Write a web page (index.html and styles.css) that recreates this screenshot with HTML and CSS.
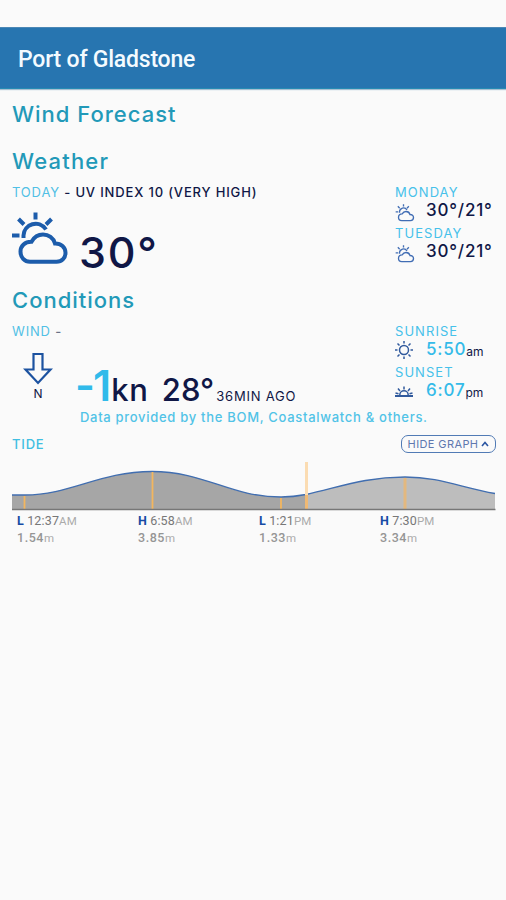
FILE: index.html
```html
<!DOCTYPE html>
<html lang="en">
<head>
<meta charset="utf-8">
<title>Port of Gladstone</title>
<link rel="stylesheet" href="styles.css">
</head>
<body>
<svg class="defs" aria-hidden="true">
  <symbol id="cloud" viewBox="0 0 56 54">
    <path d="M18 49.800H44.500c5.500 0 9-4 9-9 0-5.500-4.500-9.500-10.500-9.300C41.500 26 36.500 22.500 31 22.500c-5.500 0-9 2.800-11.500 7.200C13 29.500 8.500 34 8.500 39.500c0 6 4 10.300 9.500 10.300z"/>
    <path d="M11.500 26v-2.500C12 12 27 7 34 17.500"/>
    <path d="M23.500 .5v7M6.500 7l5.500 5.500M39.500 7l-5.500 5.500M0 23.500h7.500"/>
  </symbol>
</svg>
<div class="statusbar"></div>
<header class="appbar">Port of Gladstone</header>
<main>
  <h2 class="first">Wind Forecast</h2>
  <h2 class="second">Weather</h2>
  <section class="split weather">
    <div>
      <p class="label uv"><span>TODAY</span> - UV INDEX 10 (VERY HIGH)</p>
      <div class="current">
        <svg class="cloud-big"><use href="#cloud"/></svg>
        <span class="temp">30°</span>
      </div>
    </div>
    <aside>
      <p class="day">MONDAY</p>
      <div class="reading"><svg class="cloud-small"><use href="#cloud"/></svg><span class="range">30°/21°</span></div>
      <p class="day">TUESDAY</p>
      <div class="reading"><svg class="cloud-small"><use href="#cloud"/></svg><span class="range">30°/21°</span></div>
    </aside>
  </section>
  <h2 class="third">Conditions</h2>
  <section class="split conditions">
    <div>
      <p class="label wind"><span>WIND</span> <em>-</em></p>
      <div class="windrow">
        <div class="direction">
          <svg width="30" height="34" viewBox="0 0 30 34"><path d="M10.500 2h9v15.500h8L15 31 2.500 17.500h8z" fill="none" stroke="#1c52a0" stroke-width="2.200"/></svg>
          <span>N</span>
        </div>
        <span class="speed">-1</span><span class="unit">kn</span><span class="air">28°</span><span class="ago">36MIN AGO</span>
      </div>
    </div>
    <aside>
      <p class="day">SUNRISE</p>
      <div class="reading">
        <svg class="sun" viewBox="0 0 18 18"><circle cx="9" cy="9" r="4.500"/><path d="M9 0v2.500M9 15.500V18M0 9h2.500M15.500 9H18M2.500 2.500l2 2M13.500 13.500l2 2M2.500 15.500l2-2M13.500 4.500l2-2"/></svg>
        <span class="time">5:50</span><small>am</small>
      </div>
      <p class="day">SUNSET</p>
      <div class="reading">
        <svg class="sun" viewBox="0 0 18 18"><path d="M0 14h18" stroke-width="2"/><path d="M4.800 13a4.200 4.200 0 0 1 8.400 0M9 4.500v3M3 6.500l2 2.500M15 6.500l-2 2.500M.5 11l3 .7M17.500 11l-3 .7"/></svg>
        <span class="time">6:07</span><small>pm</small>
      </div>
    </aside>
  </section>
  <p class="credit">Data provided by the BOM, Coastalwatch &amp; others.</p>
  <div class="tidehead">
    <span class="tide">TIDE</span>
    <button type="button"><span>HIDE GRAPH</span><svg width="8" height="6" viewBox="0 0 8 6"><path d="M1 5l3-3.500L7 5" fill="none" stroke="#2b55a2" stroke-width="1.600"/></svg></button>
  </div>
  <svg class="graph" width="484" height="52" viewBox="12 460 484 52">
    <path fill="#a6a6a6" d="M12 495H25C70 495 100 471.500 152 471.500C205 471.500 230 497 281 497Q293 497 306 494.500V510H12z"/>
    <path fill="#bdbdbd" d="M306 494.500C340 487 365 477 405 477C438 477 460 487 495 493.500V510H306z"/>
    <path fill="none" stroke="#416eb0" stroke-width="1.300" d="M12 495H25C70 495 100 471.500 152 471.500C205 471.500 230 497 281 497Q293 497 306 494.500C340 487 365 477 405 477C438 477 460 487 495 493.500"/>
    <path stroke="#f3b65e" stroke-width="1.800" d="M24.500 496v13M152.500 472v37M281 498v11"/>
    <path stroke="#e3b87f" stroke-width="3" d="M405 478v31"/>
    <path stroke="#fbdcb2" stroke-width="3" d="M306.500 462v33"/>
    <path stroke="#efb974" stroke-width="3" d="M306.500 495v14"/>
    <path stroke="#777" stroke-width="1.500" d="M12 509.500H495.500"/>
  </svg>
  <div class="tides">
    <div><p><b>L</b> 12:37<i>AM</i></p><p class="height">1.54<i>m</i></p></div>
    <div><p><b>H</b> 6:58<i>AM</i></p><p class="height">3.85<i>m</i></p></div>
    <div><p><b>L</b> 1:21<i>PM</i></p><p class="height">1.33<i>m</i></p></div>
    <div><p><b>H</b> 7:30<i>PM</i></p><p class="height">3.34<i>m</i></p></div>
  </div>
</main>
</body>
</html>
```
FILE: styles.css
```css
* { box-sizing: border-box; }
body { margin: 0; min-height: 900px; background: #fafafa; color: #101746; font-family: Inter, "Liberation Sans", sans-serif; }
p, h2 { margin: 0; white-space: nowrap; }
.defs { display: none; }
.statusbar { height: 27px; }
.appbar { height: 62px; padding-left: 18px; background: #2775b0; border-top: 1px solid #4b87b5; border-bottom: 1px solid #268bb4; box-shadow: 0 1px 1px #a8c0d2; color: #f4fbff; font: 500 23px/64px Roboto, sans-serif; letter-spacing: -.22px; }
main { padding: 0 10px 0 12px; }
h2 { color: #2299b8; font-size: 22px; font-weight: 500; letter-spacing: 1px; }
.first { line-height: 50px; }
.second { line-height: 44px; letter-spacing: 1.200px; }
.third { line-height: 48px; }
.split { display: grid; grid-template-columns: 383px 1fr; }
.weather { height: 93px; }
.conditions { height: 83px; }
.label { font-size: 13px; line-height: 19px; font-weight: 500; letter-spacing: .84px; }
.label span { color: #50c0e5; font-weight: 400; }
.wind { line-height: 15px; }
.wind em { color: #6a7288; font-style: normal; }
.current { display: flex; padding-top: 10px; }
.cloud-big { width: 56px; height: 54px; fill: none; stroke: #1c5cab; stroke-width: 4; }
.temp { margin-left: 11px; padding-top: 13px; font-size: 43px; line-height: 54px; font-weight: 500; letter-spacing: 1.800px; }
.day { color: #46c1ea; font-size: 13px; line-height: 18px; letter-spacing: 1.050px; }
.reading { height: 23px; display: flex; align-items: center; }
.cloud-small { width: 20px; height: 18px; fill: none; stroke: #416db4; stroke-width: 4; }
.range { margin-left: 11px; font-size: 17px; line-height: 17px; font-weight: 500; letter-spacing: .8px; margin-top: -4px; }
.conditions .day { line-height: 14px; }
.conditions .day + .reading { height: 27px; }
.sun { width: 18px; height: 18px; fill: none; stroke: #315a9d; stroke-width: 1.500; margin-bottom: 3px; }
.time { margin: -5px 0 0 13px; color: #35bbe9; font-size: 17px; font-weight: 500; letter-spacing: .8px; }
.reading small { font-size: 12px; line-height: 14px; }
.windrow { display: flex; align-items: baseline; }
.direction { width: 52px; align-self: flex-start; padding-top: 13px; display: flex; flex-direction: column; align-items: center; }
.direction span { font-size: 12px; line-height: 15px; }
.speed { margin-left: 11px; color: #30baea; font-size: 43px; line-height: 92px; font-weight: 600; letter-spacing: -2px; }
.unit, .air { font-size: 31px; font-weight: 500; }
.unit { margin-left: 2px; letter-spacing: .8px; }
.air { margin-left: 13px; }
.ago { margin-left: 2px; font-size: 13px; letter-spacing: .8px; }
.credit { padding-left: 68px; color: #51c3e7; font-size: 13px; line-height: 21px; font-weight: 500; letter-spacing: .7px; }
.tidehead { height: 32px; display: flex; align-items: center; justify-content: space-between; }
.tide { color: #40bee1; font-size: 13px; letter-spacing: .8px; font-weight: 500; }
button { width: 95px; height: 18px; display: flex; align-items: center; justify-content: center; gap: 3px; padding: 0; border: 1px solid #517bb5; border-radius: 7px; background: #fafafa; color: #6078af; font: 400 11px/15px Inter, sans-serif; letter-spacing: .4px; }
.graph { display: block; }
.tides { display: grid; grid-template-columns: repeat(4, 121px); padding: 1px 0 0 5px; color: #777; font: 12.500px/16px Roboto, sans-serif; letter-spacing: .15px; }
.tides b { color: #164ba5; }
.tides i { color: #aaa; font-style: normal; font-size: 11.500px; }
.tides .height { color: #959595; font-weight: 500; letter-spacing: .55px; line-height: 17px; }
.tides .height i { font-weight: 400; }
```
